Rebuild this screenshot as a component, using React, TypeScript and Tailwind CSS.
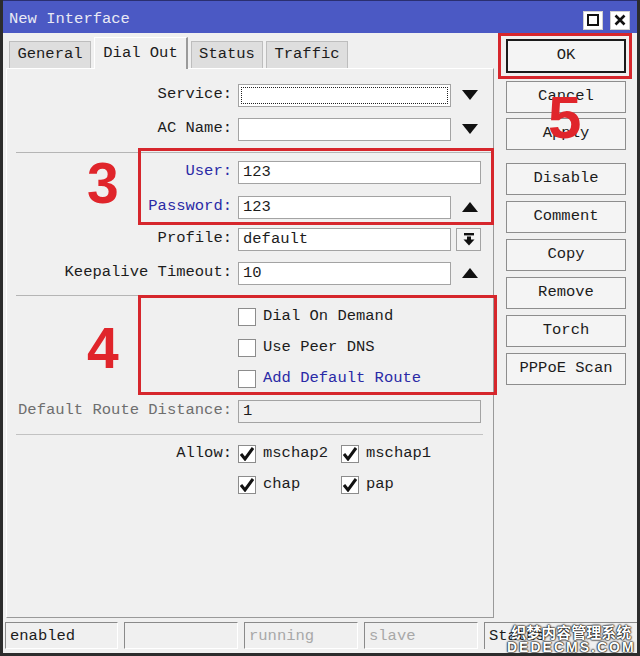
import React from "react";

const buttons = ["Disable", "Comment", "Copy", "Remove", "Torch", "PPPoE Scan"];

function Down() {
  return (
    <svg width="16" height="10" viewBox="0 0 16 10">
      <polygon points="0,0 16,0 8,10" fill="#111" />
    </svg>
  );
}

function Up() {
  return (
    <svg width="16" height="10" viewBox="0 0 16 10">
      <polygon points="0,10 16,10 8,0" fill="#111" />
    </svg>
  );
}

function Check({ checked }: { checked?: boolean }) {
  return (
    <div className="w-[18px] h-[18px] border border-[#8c8c8c] bg-white flex items-center justify-center shrink-0">
      {checked && (
        <svg width="14" height="14" viewBox="0 0 14 14">
          <path d="M1 7 L5 12 L13 1" stroke="#111" strokeWidth="3" fill="none" strokeLinejoin="miter" />
        </svg>
      )}
    </div>
  );
}

function Row({
  label,
  labelClass = "",
  className = "",
  children,
}: {
  label?: string;
  labelClass?: string;
  className?: string;
  children: React.ReactNode;
}) {
  return (
    <div className={`flex items-center h-[24px] ${className}`}>
      <div className={`w-[225px] text-right whitespace-nowrap ${labelClass}`}>{label}</div>
      <div className="ml-[6px] flex items-center">{children}</div>
    </div>
  );
}

function Field({ value = "", wide, disabled }: { value?: string; wide?: boolean; disabled?: boolean }) {
  return (
    <div
      className={`h-[23px] border border-[#a3a3a3] pl-[4px] leading-[21px] ${wide ? "w-[243px]" : "w-[213px]"} ${
        disabled ? "bg-[#f0f0f0]" : "bg-white"
      }`}
    >
      {value}
    </div>
  );
}

export default function App() {
  return (
    <div className="w-[640px] h-[656px] relative bg-[#f0f0f0] border-x-[3px] border-b-[3px] border-[#2c2c2c] overflow-hidden font-['Liberation_Mono',monospace] text-[15.5px] text-[#1c1c1c]">
      {/* title bar */}
      <div className="h-[33px] bg-[#4b59c4] border-t border-[#2a2f70] flex items-center justify-between pl-[6px] pr-[7px] pt-[6px]">
        <span className="text-[#e9e9f4] text-[15.5px]">New Interface</span>
        <div className="flex gap-[7px]">
          <div className="w-[20px] h-[19px] bg-white border border-[#d0d0d0] flex items-center justify-center">
            <div className="w-[12px] h-[12px] border-2 border-[#111]" />
          </div>
          <div className="w-[20px] h-[19px] bg-white border border-[#d0d0d0] flex items-center justify-center">
            <svg width="12" height="12" viewBox="0 0 12 12">
              <path d="M1.5 1.5 L10.5 10.5 M10.5 1.5 L1.5 10.5" stroke="#111" strokeWidth="2.6" />
            </svg>
          </div>
        </div>
      </div>

      <div className="flex h-[585px]">
        {/* left: tabs + panel */}
        <div className="w-[491px] flex flex-col">
          <div className="h-[35px] flex items-end pl-[6px] gap-[3px]">
            <div className="w-[82px] h-[27px] bg-[#dedede] border border-b-0 border-[#bdbdbd] flex items-center justify-center">
              General
            </div>
            <div className="w-[94px] h-[32px] bg-[#f0f0f0] border-t border-l border-white border-r-2 border-r-[#9a9a9a] flex items-center justify-center -mb-px relative z-10">
              Dial Out
            </div>
            <div className="w-[72px] h-[27px] bg-[#dedede] border border-b-0 border-[#bdbdbd] flex items-center justify-center">
              Status
            </div>
            <div className="w-[82px] h-[27px] bg-[#dedede] border border-b-0 border-[#bdbdbd] flex items-center justify-center">
              Traffic
            </div>
          </div>

          <div className="flex-1 ml-[3px] border-t border-l border-white border-r border-b border-r-[#9a9a9a] border-b-[#9a9a9a] flex flex-col">
            <Row label="Service:" className="mt-[14px]">
              <div className="w-[213px] h-[23px] border border-[#a3a3a3] bg-white p-[2px]">
                <div className="w-full h-full border border-dotted border-[#222]" />
              </div>
              <div className="w-[28px] ml-[5px] flex justify-center">
                <Down />
              </div>
            </Row>
            <Row label="AC Name:" className="mt-[10px]">
              <Field />
              <div className="w-[28px] ml-[5px] flex justify-center">
                <Down />
              </div>
            </Row>
            <div className="h-px bg-[#b5b5b5] ml-[9px] mt-[11px]" />
            <Row label="User:" labelClass="text-[#2a2aa6]" className="mt-[7px]">
              <Field value="123" wide />
            </Row>
            <Row label="Password:" labelClass="text-[#2a2aa6]" className="mt-[11px]">
              <Field value="123" />
              <div className="w-[28px] ml-[5px] flex justify-center">
                <Up />
              </div>
            </Row>
            <Row label="Profile:" className="mt-[8px]">
              <Field value="default" />
              <div className="w-[25px] h-[23px] ml-[5px] border border-[#a3a3a3] bg-[#f4f4f4] flex items-center justify-center">
                <svg width="14" height="14" viewBox="0 0 14 14">
                  <rect x="2" y="1" width="10" height="2.4" fill="#111" />
                  <rect x="5" y="4.5" width="4" height="3.5" fill="#111" />
                  <polygon points="1.5,7.5 12.5,7.5 7,13.5" fill="#111" />
                </svg>
              </div>
            </Row>
            <Row label="Keepalive Timeout:" className="mt-[10px]">
              <Field value="10" />
              <div className="w-[28px] ml-[5px] flex justify-center">
                <Up />
              </div>
            </Row>
            <div className="h-px bg-[#b5b5b5] ml-[9px] mt-[10px]" />
            {[
              { t: "Dial On Demand", c: "" },
              { t: "Use Peer DNS", c: "" },
              { t: "Add Default Route", c: "text-[#2a2aa6]" },
            ].map((r, i) => (
              <Row key={r.t} className={i === 0 ? "mt-[9px]" : "mt-[7px]"}>
                <Check />
                <span className={`ml-[7px] ${r.c}`}>{r.t}</span>
              </Row>
            ))}
            <Row label="Default Route Distance:" labelClass="text-[#6e6e6e]" className="mt-[8px]">
              <Field value="1" wide disabled />
            </Row>
            <div className="h-px bg-[#c2c2c2] ml-[9px] mr-[10px] mt-[11px]" />
            <Row label="Allow:" className="mt-[7px]">
              <div className="w-[103px] flex items-center">
                <Check checked />
                <span className="ml-[7px]">mschap2</span>
              </div>
              <div className="flex items-center">
                <Check checked />
                <span className="ml-[7px]">mschap1</span>
              </div>
            </Row>
            <Row className="mt-[7px]">
              <div className="w-[103px] flex items-center">
                <Check checked />
                <span className="ml-[7px]">chap</span>
              </div>
              <div className="flex items-center">
                <Check checked />
                <span className="ml-[7px]">pap</span>
              </div>
            </Row>
          </div>
        </div>

        {/* right: buttons */}
        <div className="flex-1 pl-[12px] flex flex-col">
          <div className="mt-[6px] w-[120px] h-[34px] border-2 border-[#1a1a1a] bg-[#f4f4f4] flex items-center justify-center">
            OK
          </div>
          <div className="mt-[8px] w-[120px] h-[32px] border border-[#8d8d8d] bg-[#f4f4f4] flex items-center justify-center">
            Cancel
          </div>
          <div className="mt-[5px] w-[120px] h-[32px] border border-[#8d8d8d] bg-[#f4f4f4] flex items-center justify-center">
            Apply
          </div>
          <div className="mt-[7px]" />
          {buttons.map((b) => (
            <div
              key={b}
              className="mt-[6px] w-[120px] h-[32px] border border-[#8d8d8d] bg-[#f4f4f4] flex items-center justify-center"
            >
              {b}
            </div>
          ))}
        </div>
      </div>

      {/* status bar */}
      <div className="flex gap-[6px] pl-[2px] pt-[4px]">
        <div className="w-[113px] h-[27px] border-t border-l border-[#8a8a8a] border-r border-b border-r-white border-b-white pl-[4px] leading-[26px]">
          enabled
        </div>
        <div className="w-[114px] h-[27px] border-t border-l border-[#8a8a8a] border-r border-b border-r-white border-b-white" />
        <div className="w-[114px] h-[27px] border-t border-l border-[#8a8a8a] border-r border-b border-r-white border-b-white pl-[4px] leading-[26px] text-[#a8a8a8]">
          running
        </div>
        <div className="w-[114px] h-[27px] border-t border-l border-[#8a8a8a] border-r border-b border-r-white border-b-white pl-[4px] leading-[26px] text-[#a8a8a8]">
          slave
        </div>
        <div className="flex-1 h-[27px] border-t border-l border-[#8a8a8a] pl-[4px] leading-[26px]">
          Status
        </div>
      </div>

      {/* annotations */}
      <div className="absolute left-[135px] top-[148px] w-[356px] h-[77px] border-[3px] border-[#d6262c] pointer-events-none" />
      <div className="absolute left-[135px] top-[295px] w-[359px] h-[100px] border-[3px] border-[#d6262c] pointer-events-none" />
      <div className="absolute left-[495px] top-[33px] w-[134px] h-[46px] border-[3px] border-[#d6262c] pointer-events-none" />
      <div className="absolute left-[84px] top-[155px] text-[57px] leading-none font-bold font-['Liberation_Sans',sans-serif] text-[#e0252b]">
        3
      </div>
      <div className="absolute left-[84px] top-[320px] text-[57px] leading-none font-bold font-['Liberation_Sans',sans-serif] text-[#e0252b]">
        4
      </div>
      <div className="absolute left-[545px] top-[88px] text-[60px] leading-none font-bold font-['Liberation_Sans',sans-serif] text-[#e0252b]">
        5
      </div>

      {/* corner watermark */}
      <div className="absolute left-[504px] top-[624px] flex flex-col items-center leading-none text-white font-bold font-['Noto_Sans_CJK_SC',sans-serif] [text-shadow:0_0_2px_#000,0_0_2px_#000,0_0_1px_#000]">
        <span className="text-[15px]">织梦内容管理系统</span>
        <span className="text-[14px] font-['Liberation_Sans',sans-serif] tracking-[2px] mt-[1px]">DEDECMS.COM</span>
      </div>
    </div>
  );
}
